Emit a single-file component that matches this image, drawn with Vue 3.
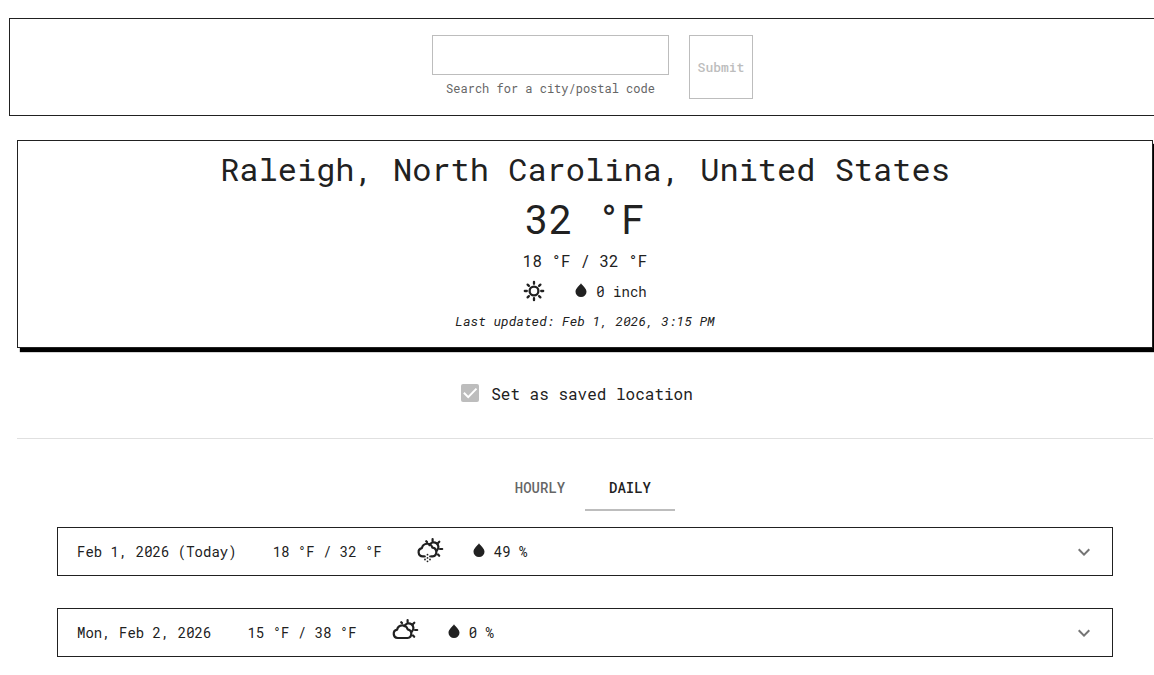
<script setup>
import { ref } from 'vue'

const query = ref('')
const saved = ref(true)
const activeTab = ref('DAILY')
const tabs = ['HOURLY', 'DAILY']
const days = [
  { date: 'Feb 1, 2026 (Today)', temps: '18 °F / 32 °F', snow: true, chance: '49 %' },
  { date: 'Mon, Feb 2, 2026', temps: '15 °F / 38 °F', snow: false, chance: '0 %' },
]
</script>

<template>
  <div class="page">
    <form class="search" @submit.prevent>
      <div class="field">
        <input id="city" v-model="query" type="text" />
        <label for="city">Search for a city/postal code</label>
      </div>
      <button class="submit" type="submit" disabled>Submit</button>
    </form>

    <main>
      <section class="current">
        <h1>Raleigh, North Carolina, United States</h1>
        <p class="now">32 °F</p>
        <p class="range">18 °F / 32 °F</p>
        <div class="conditions">
          <svg class="sun" viewBox="0 0 22 22" aria-hidden="true">
            <circle cx="11" cy="11" r="4.4" />
            <path d="M11 1.8v2M11 18.2v2M1.800 11h2M18.200 11h2M4.600 4.600l1.300 1.300M16.100 16.100l1.300 1.300M4.600 17.400l1.300-1.300M16.100 5.900l1.300-1.300" />
          </svg>
          <span class="rain">
            <svg class="drop" viewBox="0 0 12 14" aria-hidden="true">
              <path d="M6 .2C4.700 2.500.5 5.300.5 8.700a5.500 5.200 0 0 0 11 0C11.500 5.300 7.300 2.500 6 .2z" />
            </svg>
            0 inch
          </span>
        </div>
        <p class="updated">Last updated: Feb 1, 2026, 3:15 PM</p>
      </section>

      <label class="save">
        <input v-model="saved" type="checkbox" disabled />
        Set as saved location
      </label>

      <hr />

      <div class="tabs" role="tablist">
        <button
          v-for="tab in tabs"
          :key="tab"
          type="button"
          role="tab"
          :aria-selected="tab === activeTab"
          :class="{ active: tab === activeTab }"
          @click="activeTab = tab"
        >
          {{ tab }}
        </button>
      </div>

      <div class="days">
        <button v-for="day in days" :key="day.date" type="button" class="day">
          <span>{{ day.date }}</span>
          <span>{{ day.temps }}</span>
          <svg class="weather" viewBox="2 2 28 28" aria-hidden="true">
            <path d="M16.600 3v2.200M23.300 5.700l-1.500 1.500M24 13h2.200M22 18.500l1.200 1.300M10.200 5.200l.8.900" />
            <path d="M13.400 9.200a4.700 4.700 0 1 1 7.400 5.400" />
            <path
              v-if="day.snow"
              d="M8 20.400H6.800a4.200 4.200 0 0 1-.9-8.300A5.400 5.400 0 0 1 16.400 11.700a4.400 4.400 0 0 1 .3 8.700H15.200"
            />
            <path
              v-else
              d="M6.600 21a4.200 4.200 0 0 1-.5-8.300A5.400 5.400 0 0 1 16.600 12.300a4.400 4.400 0 0 1-.1 8.700z"
            />
            <path
              v-if="day.snow"
              class="flakes"
              d="M11.500 18.700v.01M9 20.400v.01M14 20.400v.01M11.500 21.900v.01M9 23.500v.01M14 23.500v.01M11.500 25.300v.01"
            />
          </svg>
          <span class="rain">
            <svg class="drop" viewBox="0 0 12 14" aria-hidden="true">
              <path d="M6 .2C4.700 2.500.5 5.300.5 8.700a5.500 5.200 0 0 0 11 0C11.500 5.300 7.300 2.500 6 .2z" />
            </svg>
            {{ day.chance }}
          </span>
          <svg class="chevron" viewBox="0 0 24 24" aria-hidden="true">
            <path d="M16.590 8.590 12 13.170 7.410 8.590 6 10l6 6 6-6z" />
          </svg>
        </button>
      </div>
    </main>
  </div>
</template>

<style>
body {
  margin: 0;
  background: #fff;
}
</style>

<style scoped>
.page {
  overflow: hidden;
  padding: 18px 0;
  color: #212121;
  font-family: "Roboto Mono", "Liberation Mono", monospace;
  font-size: 14px;
}
input,
button {
  box-sizing: border-box;
  margin: 0;
  font-family: inherit;
  border-radius: 0;
}
.search {
  display: flex;
  justify-content: center;
  gap: 20px;
  margin: 0 -22px 24px 9px;
  padding: 16px;
  border: 1px solid #212121;
}
.field {
  display: flex;
  flex-direction: column;
  width: 237px;
}
.field input {
  width: 100%;
  height: 40px;
  padding: 8px 12px;
  border: 1px solid #bdbdbd;
  background: #fff;
  font-size: 16px;
}
.field label {
  margin-top: 3px;
  color: #666;
  font-size: 12px;
  line-height: 20px;
  text-align: center;
}
.submit {
  width: 64px;
  height: 64px;
  padding: 0;
  border: 1px solid #bdbdbd;
  background: #fff;
  color: #bdbdbd;
  font-size: 13px;
  font-weight: 500;
}
main {
  margin: 0 1px 0 17px;
}
.current {
  display: flex;
  flex-direction: column;
  align-items: center;
  padding: 6px 16px 12px;
  border: 1px solid #212121;
  background: #fff;
  box-shadow: 3px 4px 1px #000;
}
h1,
p {
  margin: 0;
  font-weight: 400;
}
h1 {
  font-size: 32px;
  line-height: 44px;
}
.now {
  font-size: 40px;
  line-height: 56px;
}
.range {
  font-size: 16px;
  line-height: 28px;
}
.conditions {
  display: flex;
  align-items: center;
  gap: 30px;
  height: 32px;
}
.updated {
  font-size: 13px;
  font-style: italic;
  line-height: 28px;
}
.sun {
  width: 22px;
  height: 22px;
  fill: none;
  stroke: #212121;
  stroke-width: 2.3;
  stroke-linecap: round;
}
.rain {
  display: flex;
  align-items: center;
  gap: 9px;
}
.drop {
  width: 12px;
  height: 14px;
  margin-bottom: 3px;
  fill: #212121;
}
.save {
  display: flex;
  align-items: center;
  justify-content: center;
  gap: 12px;
  height: 40px;
  margin: 25px 16px 25px 0;
  font-size: 16px;
}
.save input {
  appearance: none;
  width: 18px;
  height: 18px;
  border-radius: 2px;
  background: #bdbdbd;
}
.save input:checked::before {
  content: "";
  display: block;
  width: 14px;
  height: 11px;
  margin: 4px 2px;
  background: #fff;
  clip-path: polygon(0 50%, 10% 37%, 36% 70%, 90% 0, 100% 12%, 36% 95%);
}
hr {
  height: 1px;
  margin: 0 0 24px;
  border: 0;
  background: #e0e0e0;
}
.tabs {
  display: flex;
  justify-content: center;
}
.tabs button {
  width: 90px;
  height: 48px;
  padding: 0;
  border: 0;
  border-block: 2px solid transparent;
  background: none;
  color: #666;
  font-size: 14px;
  font-weight: 500;
}
.tabs .active {
  border-bottom-color: #bdbdbd;
  color: #212121;
}
.days {
  display: flex;
  flex-direction: column;
  gap: 32px;
  padding: 16px 40px;
}
.day {
  display: flex;
  align-items: center;
  gap: 36px;
  width: 100%;
  height: 49px;
  padding: 0 16px 0 19px;
  border: 1px solid #212121;
  background: #fff;
  color: #212121;
  font-size: 14px;
}
.weather {
  width: 28px;
  height: 28px;
  margin-right: -9px;
  overflow: visible;
  fill: none;
  stroke: #212121;
  stroke-width: 2.2;
  stroke-linecap: round;
  stroke-linejoin: round;
}
.flakes {
  stroke-width: 1.8;
}
.chevron {
  width: 24px;
  height: 24px;
  margin-left: auto;
  fill: #757575;
}
</style>
